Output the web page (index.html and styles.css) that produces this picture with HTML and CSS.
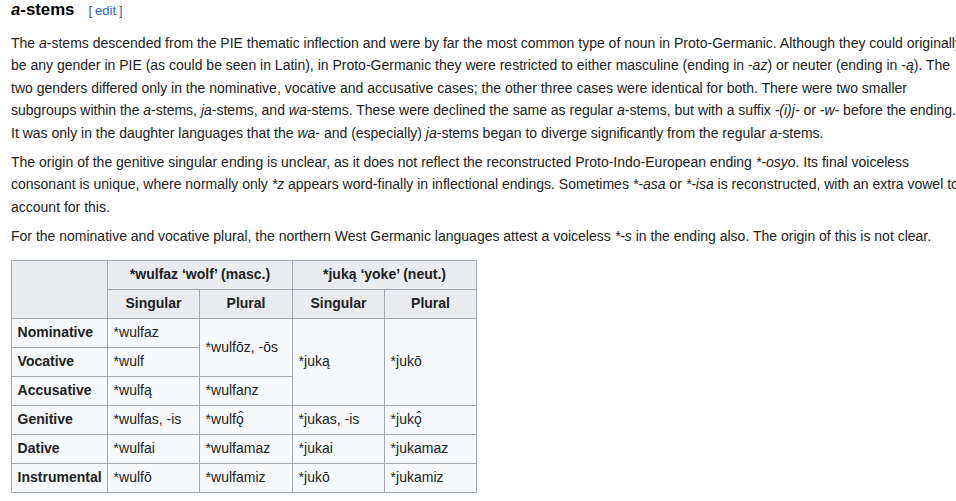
FILE: index.html
```html
<!DOCTYPE html>
<html>
<head>
<meta charset="utf-8">
<link rel="stylesheet" href="styles.css">
</head>
<body>
<div class="content">
  <h3 class="heading"><span class="headline"><i>a</i>-stems</span><span class="editsection"><span class="bracket">[</span><a href="#" class="editlink">edit</a><span class="bracket">]</span></span></h3>
  <p>The <i>a</i>-stems descended from the PIE thematic inflection and were by far the most common type of noun in Proto-Germanic. Although they could originally be any gender in PIE (as could be seen in Latin), in Proto-Germanic they were restricted to either masculine (ending in -<i>az</i>) or neuter (ending in -<i>ą</i>). The two genders differed only in the nominative, vocative and accusative cases; the other three cases were identical for both. There were two smaller subgroups within the <i>a</i>-stems, <i>ja</i>-stems, and <i>wa</i>-stems. These were declined the same as regular <i>a</i>-stems, but with a suffix <i>-(i)j-</i> or <i>-w-</i> before the ending. It was only in the daughter languages that the <i>wa</i>- and (especially) <i>ja</i>-stems began to diverge significantly from the regular <i>a</i>-stems.</p>
  <p>The origin of the genitive singular ending is unclear, as it does not reflect the reconstructed Proto-Indo-European ending <i>*-osyo</i>. Its final voiceless consonant is unique, where normally only <i>*z</i> appears word-finally in inflectional endings. Sometimes <i>*-asa</i> or <i>*-isa</i> is reconstructed, with an extra vowel to account for this.</p>
  <p>For the nominative and vocative plural, the northern West Germanic languages attest a voiceless <i>*-s</i> in the ending also. The origin of this is not clear.</p>
  <table class="wikitable">
    <colgroup>
      <col class="c1"><col class="c2"><col class="c3"><col class="c4"><col class="c5">
    </colgroup>
    <tr>
      <th rowspan="2" class="corner"></th>
      <th colspan="2">*wulfaz ‘wolf’ (masc.)</th>
      <th colspan="2">*juką ‘yoke’ (neut.)</th>
    </tr>
    <tr>
      <th>Singular</th><th>Plural</th><th>Singular</th><th>Plural</th>
    </tr>
    <tr>
      <th class="rowh">Nominative</th><td>*wulfaz</td><td rowspan="2">*wulfōz, -ōs</td><td rowspan="3">*juką</td><td rowspan="3">*jukō</td>
    </tr>
    <tr>
      <th class="rowh">Vocative</th><td>*wulf</td>
    </tr>
    <tr>
      <th class="rowh">Accusative</th><td>*wulfą</td><td>*wulfanz</td>
    </tr>
    <tr>
      <th class="rowh">Genitive</th><td>*wulfas, -is</td><td>*wulfǫ̂</td><td>*jukas, -is</td><td>*jukǫ̂</td>
    </tr>
    <tr>
      <th class="rowh">Dative</th><td>*wulfai</td><td>*wulfamaz</td><td>*jukai</td><td>*jukamaz</td>
    </tr>
    <tr>
      <th class="rowh">Instrumental</th><td>*wulfō</td><td>*wulfamiz</td><td>*jukō</td><td>*jukamiz</td>
    </tr>
  </table>
</div>
</body>
</html>
```
FILE: styles.css
```css
html, body {
  margin: 0;
  padding: 0;
  background: #ffffff;
  overflow: hidden;
}
body {
  font-family: "Liberation Sans", Arial, sans-serif;
  font-size: 14px;
  color: #202122;
}
.content {
  padding: 0 0 0 11px;
  width: 956px;
}
.heading {
  margin: 0 0 11px 0;
  font-size: 16.8px;
  line-height: 20px;
  font-weight: bold;
  color: #000;
  white-space: nowrap;
}
.editsection {
  font-size: 13px;
  font-weight: normal;
  margin-left: 14px;
}
.bracket {
  color: #54595d;
}
.editlink {
  color: #3366cc;
  text-decoration: none;
  margin: 0 3px;
}
p {
  margin: 7px 0;
  line-height: 22.4px;
}
.wikitable {
  margin: 12px 0;
  border-collapse: collapse;
  border: 1px solid #a2a9b1;
  background: #f8f9fa;
  color: #202122;
  font-size: 14px;
  table-layout: fixed;
  width: 466px;
}
.c1 { width: 96px; }
.c2 { width: 92px; }
.c3 { width: 93px; }
.c4 { width: 92px; }
.c5 { width: 92px; }
.wikitable th, .wikitable td {
  border: 1px solid #a2a9b1;
  padding: 2.8px 5.6px;
  line-height: 22.4px;
  height: 22.4px;
  white-space: nowrap;
}
.wikitable th {
  background: #eaecf0;
  text-align: center;
  font-weight: bold;
}
.wikitable th.rowh {
  background: #f8f9fa;
  text-align: left;
}
.wikitable td {
  text-align: left;
  vertical-align: middle;
}
```
